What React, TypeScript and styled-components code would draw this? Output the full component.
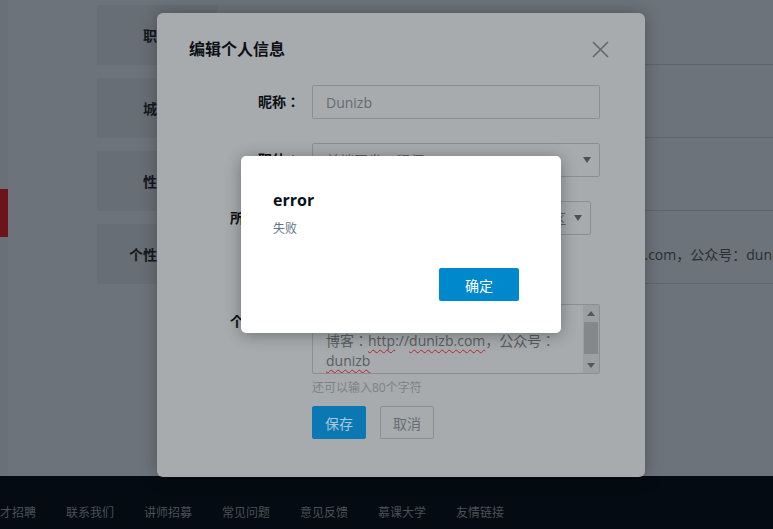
import React from "react";
import styled, { createGlobalStyle } from "styled-components";

const GlobalStyle = createGlobalStyle`
  * { box-sizing: border-box; }
  html, body { margin: 0; padding: 0; }
  body {
    background: #6d737a;
    font-family: "Open Sans", "Noto Sans CJK SC", "Noto Sans", sans-serif;
    overflow: hidden;
  }
`;

const Page = styled.div`
  position: relative;
  width: 773px;
  height: 529px;
  overflow: hidden;
  display: flex;
  flex-direction: column;
`;

const Main = styled.div`
  height: 476px;
  display: flex;
  background: #6d737a;
`;

const Sidebar = styled.div`
  width: 97px;
  flex-shrink: 0;
  padding-top: 189px;
  background: linear-gradient(to right, #6a7077 0, #6a7077 8px, transparent 8px);
`;

const RedTab = styled.div`
  width: 8px;
  height: 48px;
  background: #6c1419;
`;

const InfoList = styled.div`
  flex: 1;
  display: flex;
  flex-direction: column;
  gap: 13px;
  padding-top: 5px;
`;

const InfoRow = styled.div`
  display: flex;
  height: 60px;
`;

const InfoLabel = styled.div`
  width: 120px;
  flex-shrink: 0;
  background: #686e75;
  display: flex;
  align-items: center;
  justify-content: center;
  font-size: 14px;
  font-weight: 700;
  color: #15181c;
`;

const InfoValue = styled.div<{ $indent?: number }>`
  flex: 1;
  display: flex;
  align-items: center;
  border-bottom: 1px solid #5f656b;
  padding-left: ${(p) => p.$indent ?? 20}px;
  font-size: 14px;
  color: #2a2e33;
  white-space: nowrap;
  overflow: hidden;
`;

const Footer = styled.div`
  flex: 1;
  background: #050b12;
  display: flex;
  gap: 30px;
  padding-top: 30px;
  margin-left: -12px;
`;

const FooterLink = styled.span`
  font-size: 12px;
  line-height: 14px;
  color: #4a5157;
  white-space: nowrap;
`;

const EditModal = styled.div`
  position: absolute;
  left: 157px;
  top: 13px;
  width: 488px;
  height: 464px;
  background: #a7abae;
  border-radius: 6px;
  box-shadow: 0 0 18px rgba(0, 0, 0, 0.28);
  padding: 24px 36px 0 32px;
  display: flex;
  flex-direction: column;
`;

const ModalHeader = styled.div`
  display: flex;
  align-items: center;
  justify-content: space-between;
  height: 24px;
`;

const ModalTitle = styled.h2`
  margin: 0;
  font-size: 16px;
  font-weight: 700;
  line-height: 24px;
  color: #0d1014;
`;

const CloseButton = styled.button`
  border: none;
  background: transparent;
  padding: 0;
  width: 17px;
  height: 17px;
  display: flex;
  cursor: pointer;
`;

const Form = styled.div`
  margin-top: 24px;
  display: flex;
  flex-direction: column;
  gap: 24px;
`;

const FormRow = styled.div`
  display: flex;
  gap: 12px;
  align-items: flex-start;
`;

const FormLabel = styled.label<{ $h?: number }>`
  width: 111px;
  flex-shrink: 0;
  text-align: right;
  font-size: 14px;
  font-weight: 700;
  line-height: ${(p) => p.$h ?? 34}px;
  color: #0d1014;
  white-space: nowrap;
  font-family: "Open Sans", "Noto Sans CJK JP", sans-serif;
`;

const Field = styled.div`
  width: 288px;
  display: flex;
  flex-direction: column;
`;

const TextInput = styled.div`
  width: 288px;
  height: 34px;
  border: 1px solid #8b8f93;
  border-radius: 2px;
  padding: 0 13px;
  display: flex;
  align-items: center;
  font-size: 14px;
  color: #666a6e;
`;

const SelectGroup = styled.div`
  width: 279px;
  display: grid;
  grid-template-columns: 1fr 1fr 1fr;
  gap: 8px;
`;

const SelectBox = styled.div<{ $pad?: number }>`
  height: 34px;
  border: 1px solid #8b8f93;
  border-radius: 2px;
  padding: 0 8px 0 ${(p) => p.$pad ?? 13}px;
  display: flex;
  align-items: center;
  justify-content: space-between;
  font-size: 14px;
  color: #5a5e62;
  white-space: nowrap;
  overflow: hidden;
`;

const RadioRow = styled.div`
  height: 21px;
  display: flex;
  align-items: center;
  gap: 16px;
  font-size: 14px;
  color: #5a5e62;
`;

const TextAreaBox = styled.div`
  position: relative;
  width: 288px;
  height: 70px;
  border: 1px solid #8b8f93;
  border-radius: 2px;
  display: flex;
  overflow: hidden;
`;

const TextAreaContent = styled.div`
  flex: 1;
  padding: 6px 2px 0 13px;
  font-size: 14px;
  line-height: 20px;
  color: #595d61;
  white-space: pre;
  font-family: "Open Sans", "Noto Sans CJK JP", sans-serif;
`;

const Misspelled = styled.span`
  text-decoration: underline wavy #b8232a;
  text-decoration-thickness: 1px;
  text-underline-offset: 3px;
`;

const Scrollbar = styled.div`
  width: 16px;
  flex-shrink: 0;
  background: #9da0a3;
  display: flex;
  flex-direction: column;
  align-items: center;
`;

const ScrollArrow = styled.div`
  height: 16px;
  width: 16px;
  display: flex;
  align-items: center;
  justify-content: center;
`;

const ScrollTrack = styled.div`
  flex: 1;
  width: 100%;
  padding: 1px 1px;
`;

const ScrollThumb = styled.div`
  height: 32px;
  background: #85888b;
`;

const Hint = styled.div`
  margin-top: 7px;
  font-size: 12px;
  line-height: 14px;
  color: #7e8286;
`;

const ButtonRow = styled.div`
  margin-top: 11px;
  display: flex;
  gap: 14px;
`;

const FormButton = styled.button<{ $primary?: boolean }>`
  width: 54px;
  height: 33px;
  border-radius: 2px;
  font-family: inherit;
  font-size: 14px;
  padding: 0;
  border: 1px solid ${(p) => (p.$primary ? "#0b77b3" : "#8b8f93")};
  background: ${(p) => (p.$primary ? "#0b77b3" : "transparent")};
  color: ${(p) => (p.$primary ? "#a9c9dc" : "#6a6e72")};
`;

const AlertDialog = styled.div`
  position: absolute;
  left: 241px;
  top: 156px;
  width: 320px;
  height: 177px;
  background: #ffffff;
  border-radius: 5px;
  box-shadow: 0 2px 16px rgba(0, 0, 0, 0.32);
  padding: 33px 42px 32px 32px;
  display: flex;
  flex-direction: column;
`;

const AlertTitle = styled.div`
  font-size: 16px;
  font-weight: 700;
  line-height: 22px;
  color: #07111b;
`;

const AlertMessage = styled.div`
  margin-top: 10px;
  font-size: 12px;
  line-height: 16px;
  color: #5f7386;
`;

const AlertFooter = styled.div`
  margin-top: auto;
  display: flex;
  justify-content: flex-end;
`;

const ConfirmButton = styled.button`
  width: 80px;
  height: 33px;
  border: none;
  border-radius: 2px;
  background: #0088cc;
  color: #ffffff;
  font-family: inherit;
  font-size: 14px;
  padding: 0;
`;

const Caret = () => (
  <svg width="8" height="6" viewBox="0 0 8 6">
    <path d="M0 0 H8 L4 6 Z" fill="#4d5054" />
  </svg>
);

const ArrowIcon = ({ up }: { up?: boolean }) => (
  <svg width="8" height="5" viewBox="0 0 8 5">
    <path d={up ? "M0 5 H8 L4 0 Z" : "M0 0 H8 L4 5 Z"} fill="#55585b" />
  </svg>
);

const footerLinks = ["人才招聘", "联系我们", "讲师招募", "常见问题", "意见反馈", "慕课大学", "友情链接"];

export default function App() {
  return (
    <>
      <GlobalStyle />
      <Page>
        <Main>
          <Sidebar>
            <RedTab />
          </Sidebar>
          <InfoList>
            <InfoRow>
              <InfoLabel>职位</InfoLabel>
              <InfoValue>前端开发工程师</InfoValue>
            </InfoRow>
            <InfoRow>
              <InfoLabel>城市</InfoLabel>
              <InfoValue>北京市 北京市 海淀区</InfoValue>
            </InfoRow>
            <InfoRow>
              <InfoLabel>性别</InfoLabel>
              <InfoValue>男</InfoValue>
            </InfoRow>
            <InfoRow>
              <InfoLabel>个性签名</InfoLabel>
              <InfoValue $indent={76}>热爱前端开发，乐于分享技术心得。博客：http://dunizb.com，公众号：dunizb</InfoValue>
            </InfoRow>
          </InfoList>
        </Main>
        <Footer>
          {footerLinks.map((l) => (
            <FooterLink key={l}>{l}</FooterLink>
          ))}
        </Footer>

        <EditModal>
          <ModalHeader>
            <ModalTitle>编辑个人信息</ModalTitle>
            <CloseButton aria-label="close">
              <svg width="17" height="17" viewBox="0 0 17 17">
                <path d="M1 1 L16 16 M16 1 L1 16" stroke="#62666a" strokeWidth="1.5" />
              </svg>
            </CloseButton>
          </ModalHeader>
          <Form>
            <FormRow>
              <FormLabel>昵称：</FormLabel>
              <TextInput>Dunizb</TextInput>
            </FormRow>
            <FormRow>
              <FormLabel>职位：</FormLabel>
              <Field>
                <SelectBox>
                  前端开发工程师
                  <Caret />
                </SelectBox>
              </Field>
            </FormRow>
            <FormRow>
              <FormLabel>所在城市：</FormLabel>
              <SelectGroup>
                <SelectBox>
                  北京市
                  <Caret />
                </SelectBox>
                <SelectBox>
                  北京市
                  <Caret />
                </SelectBox>
                <SelectBox $pad={20}>
                  海淀区
                  <Caret />
                </SelectBox>
              </SelectGroup>
            </FormRow>
            <FormRow>
              <FormLabel $h={21}>性别：</FormLabel>
              <RadioRow>
                <span>◉ 男</span>
                <span>○ 女</span>
              </RadioRow>
            </FormRow>
            <FormRow>
              <FormLabel>个性签名：</FormLabel>
              <Field>
                <TextAreaBox>
                  <TextAreaContent>
                    {"热爱前端开发，乐于分享。\n博客："}
                    <Misspelled>http</Misspelled>
                    {"://"}
                    <Misspelled>dunizb.com</Misspelled>
                    {"，公众号：\n"}
                    <Misspelled>dunizb</Misspelled>
                  </TextAreaContent>
                  <Scrollbar>
                    <ScrollArrow>
                      <ArrowIcon up />
                    </ScrollArrow>
                    <ScrollTrack>
                      <ScrollThumb />
                    </ScrollTrack>
                    <ScrollArrow>
                      <ArrowIcon />
                    </ScrollArrow>
                  </Scrollbar>
                </TextAreaBox>
                <Hint>还可以输入80个字符</Hint>
                <ButtonRow>
                  <FormButton $primary>保存</FormButton>
                  <FormButton>取消</FormButton>
                </ButtonRow>
              </Field>
            </FormRow>
          </Form>
        </EditModal>

        <AlertDialog role="alertdialog">
          <AlertTitle>error</AlertTitle>
          <AlertMessage>失败</AlertMessage>
          <AlertFooter>
            <ConfirmButton>确定</ConfirmButton>
          </AlertFooter>
        </AlertDialog>
      </Page>
    </>
  );
}
